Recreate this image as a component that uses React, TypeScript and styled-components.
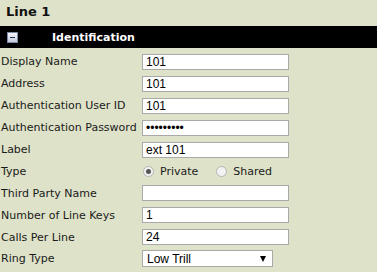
import React from 'react';
import styled, { createGlobalStyle } from 'styled-components';

const GlobalStyle = createGlobalStyle`
  html, body {
    margin: 0;
    padding: 0;
    background: #dee2c8;
  }
  body {
    font-family: "DejaVu Sans", Verdana, sans-serif;
  }
`;

const Page = styled.div`
  width: 377px;
  height: 272px;
  overflow: hidden;
  background: #dee2c8;
`;

const Title = styled.h1`
  margin: 0;
  padding: 4px 0 0 6px;
  height: 26px;
  box-sizing: border-box;
  font-size: 13px;
  font-weight: bold;
  color: #111;
`;

const SectionBar = styled.div`
  display: flex;
  align-items: center;
  height: 22px;
  background: #000;
  padding-left: 7px;
`;

const CollapseIcon = styled.span`
  width: 9px;
  height: 9px;
  border: 1px solid #7d8aa6;
  background: linear-gradient(#f4f6fb, #c4cbdb);
  display: flex;
  align-items: center;
  justify-content: center;
  &::after {
    content: '';
    width: 5px;
    height: 1px;
    background: #2a3550;
  }
`;

const SectionTitle = styled.span`
  margin-left: 34px;
  color: #fff;
  font-size: 11px;
  font-weight: bold;
`;

const Form = styled.div`
  display: grid;
  grid-template-columns: 142px 1fr;
  grid-auto-rows: 21.9px;
  align-items: center;
  padding-top: 3px;
`;

const Label = styled.div`
  padding-left: 1px;
  font-size: 11px;
  color: #1a1a1a;
  white-space: nowrap;
`;

const Field = styled.input`
  box-sizing: border-box;
  width: 147px;
  height: 16px;
  margin: 0;
  padding: 0 3px;
  border: 1px solid #a9a9a9;
  background: #fff;
  font-family: "Liberation Sans", Arial, sans-serif;
  font-size: 12px;
  color: #000;
  outline: none;
`;

const RadioGroup = styled.div`
  display: flex;
  align-items: center;
  font-size: 11px;
  color: #1a1a1a;
`;

const RadioOption = styled.label<{ $gap: number }>`
  display: flex;
  align-items: center;
  margin-right: ${(p) => p.$gap}px;
`;

const RadioDot = styled.span<{ $checked: boolean }>`
  width: 11px;
  height: 11px;
  border-radius: 50%;
  border: 1px solid #b5b5b5;
  background: #f2f2f2;
  box-sizing: border-box;
  display: flex;
  align-items: center;
  justify-content: center;
  margin: 0 6px 0 1px;
  &::after {
    content: '';
    width: 5px;
    height: 5px;
    border-radius: 50%;
    background: ${(p) => (p.$checked ? '#555' : 'transparent')};
  }
`;

const Select = styled.div`
  box-sizing: border-box;
  width: 131px;
  height: 17px;
  border: 1px solid #a9a9a9;
  background: #fff;
  display: flex;
  align-items: center;
  justify-content: space-between;
  padding: 0 6px 0 4px;
  font-family: "Liberation Sans", Arial, sans-serif;
  font-size: 12px;
  color: #000;
`;

const Arrow = styled.span`
  width: 0;
  height: 0;
  border-left: 3.5px solid transparent;
  border-right: 3.5px solid transparent;
  border-top: 6px solid #000;
`;

const rows: [string, string, boolean?][] = [
  ['Display Name', '101'],
  ['Address', '101'],
  ['Authentication User ID', '101'],
  ['Authentication Password', 'abcdefghi', true],
  ['Label', 'ext 101'],
];

const rowsAfter: [string, string][] = [
  ['Third Party Name', ''],
  ['Number of Line Keys', '1'],
  ['Calls Per Line', '24'],
];

export default function App() {
  return (
    <Page>
      <GlobalStyle />
      <Title>Line 1</Title>
      <SectionBar>
        <CollapseIcon />
        <SectionTitle>Identification</SectionTitle>
      </SectionBar>
      <Form>
        {rows.map(([label, value, pw]) => (
          <React.Fragment key={label}>
            <Label>{label}</Label>
            <Field type={pw ? 'password' : 'text'} defaultValue={value} readOnly />
          </React.Fragment>
        ))}
        <Label>Type</Label>
        <RadioGroup>
          <RadioOption $gap={17}>
            <RadioDot $checked />
            Private
          </RadioOption>
          <RadioOption $gap={0}>
            <RadioDot $checked={false} />
            Shared
          </RadioOption>
        </RadioGroup>
        {rowsAfter.map(([label, value]) => (
          <React.Fragment key={label}>
            <Label>{label}</Label>
            <Field type="text" defaultValue={value} readOnly />
          </React.Fragment>
        ))}
        <Label>Ring Type</Label>
        <Select>
          Low Trill
          <Arrow />
        </Select>
      </Form>
    </Page>
  );
}
